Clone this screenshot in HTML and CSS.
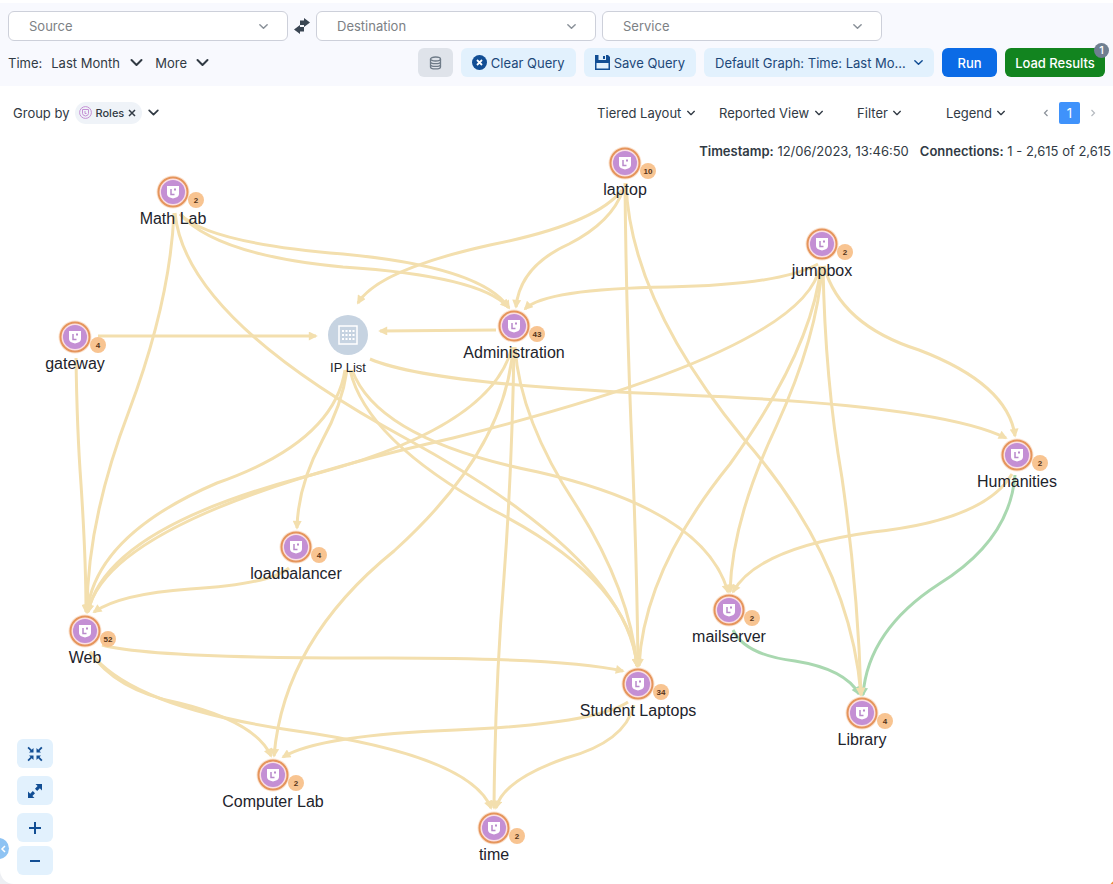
FILE: index.html
```html
<!DOCTYPE html>
<html lang="en">
<head>
    <meta charset="UTF-8">
    <meta name="viewport" content="width=device-width, initial-scale=1.0">
    <title>Traffic Map</title>
    <link rel="stylesheet" href="styles.css">
</head>
<body>

<!-- Shared icons -->
<svg class="defs" width="0" height="0" aria-hidden="true">
    <symbol id="chevron" viewBox="0 0 12 12">
        <path d="M2 4l4 4 4-4" fill="none" stroke="currentColor" stroke-width="1.6" stroke-linecap="round" stroke-linejoin="round"/>
    </symbol>
    <symbol id="shield" viewBox="0 0 14 14">
        <path d="M1 1h12v7.5q0 3-3 4l-3 1-3-1q-3-1-3-4z" fill="#fff"/>
        <path d="M5 4v5.5h3.5" fill="none" stroke="#b98acb" stroke-width="1.5"/>
        <rect x="8" y="3.5" width="2" height="2" fill="#b98acb"/>
    </symbol>
    <symbol id="node" viewBox="-18 -18 36 36">
        <circle r="16.5" fill="#fbe3cf"/>
        <circle r="14.5" fill="#fbdfe3" stroke="#e5955c" stroke-width="2"/>
        <circle r="12" fill="#c48fd4"/>
        <use href="#shield" x="-7" y="-7" width="14" height="14"/>
    </symbol>
</svg>

<header class="query">
    <div class="fields">
        <div class="field">
            <input type="text" placeholder="Source" aria-label="Source">
            <svg class="icon"><use href="#chevron"/></svg>
        </div>
        <button class="swap" aria-label="Swap source and destination">
            <svg width="16" height="16" viewBox="0 0 16 16" fill="#3a4653">
                <path d="M6 2.5h4V0l6 4.5L10 9V7H6z"/>
                <path d="M10 13.5H6V16l-6-4.5L6 7v2h4z"/>
            </svg>
        </button>
        <div class="field">
            <input type="text" placeholder="Destination" aria-label="Destination">
            <svg class="icon"><use href="#chevron"/></svg>
        </div>
        <div class="field">
            <input type="text" placeholder="Service" aria-label="Service">
            <svg class="icon"><use href="#chevron"/></svg>
        </div>
    </div>

    <div class="actions">
        <div class="time">
            <label for="time">Time:</label>
            <span class="drop">
                <select id="time"><option>Last Month</option></select>
                <svg class="icon big"><use href="#chevron"/></svg>
            </span>
            <button class="more">More <svg class="icon big"><use href="#chevron"/></svg></button>
        </div>
        <button class="btn data" aria-label="Data source">
            <svg width="13" height="14" viewBox="0 0 13 14" fill="none" stroke="#6f7b88" stroke-width="1.3">
                <ellipse cx="6.5" cy="3" rx="5" ry="2"/>
                <path d="M1.5 3v8c0 2.6 10 2.6 10 0V3M1.5 5.7c0 2.6 10 2.6 10 0M1.5 8.4c0 2.6 10 2.6 10 0"/>
            </svg>
        </button>
        <button class="btn">
            <svg width="15" height="15" viewBox="0 0 15 15">
                <circle cx="7.5" cy="7.5" r="7.5" fill="#124e94"/>
                <path d="M5 5l5 5M10 5l-5 5" stroke="#fff" stroke-width="1.8"/>
            </svg>
            Clear Query
        </button>
        <button class="btn">
            <svg width="15" height="15" viewBox="0 0 15 15">
                <path d="M0 0h13l2 2v13H0z" fill="#124e94"/>
                <path d="M3.5 0h7.5v5H3.5z" fill="#e2f1fd"/>
                <path d="M8 1h2v3H8z" fill="#124e94"/>
                <path d="M1.5 8h12v5.5h-12z" fill="#e2f1fd"/>
            </svg>
            Save Query
        </button>
        <span class="drop graph">
            <select class="btn" aria-label="Saved query"><option>Default Graph: Time: Last Mo...</option></select>
            <svg class="icon"><use href="#chevron"/></svg>
        </span>
        <button class="btn run">Run</button>
        <button class="btn load">Load Results<span class="count">1</span></button>
    </div>
</header>

<nav class="view">
    <div class="group">
        <span>Group by</span>
        <span class="chip">
            <svg width="13" height="13" viewBox="0 0 13 13" fill="none" stroke="#c48fd4">
                <circle cx="6.5" cy="6.5" r="5.9"/>
                <path d="M3.5 3.5h6v4q0 2-3 2.5-3-.5-3-2.5zM6 5v2.5h1.5"/>
            </svg>
            Roles
            <button aria-label="Remove Roles">
                <svg width="8" height="8" viewBox="0 0 8 8"><path d="M1 1l6 6M7 1L1 7" stroke="#313a44" stroke-width="1.5"/></svg>
            </button>
        </span>
        <button aria-label="Group options"><svg class="icon mid"><use href="#chevron"/></svg></button>
    </div>
    <span class="drop layout">
        <select aria-label="Layout"><option>Tiered Layout</option></select>
        <svg class="icon"><use href="#chevron"/></svg>
    </span>
    <span class="drop reported">
        <select aria-label="View"><option>Reported View</option></select>
        <svg class="icon"><use href="#chevron"/></svg>
    </span>
    <button class="filter">Filter <svg class="icon"><use href="#chevron"/></svg></button>
    <button class="legend">Legend <svg class="icon"><use href="#chevron"/></svg></button>
    <div class="pager">
        <button aria-label="Previous page"><svg width="6" height="8" viewBox="0 0 6 8"><path d="M4.5 1l-3 3 3 3" fill="none" stroke="#8a9199" stroke-width="1.2"/></svg></button>
        <button class="current">1</button>
        <button aria-label="Next page"><svg width="6" height="8" viewBox="0 0 6 8"><path d="M1.5 1l3 3-3 3" fill="none" stroke="#b5bac0" stroke-width="1.2"/></svg></button>
    </div>
</nav>

<main class="map">
    <svg class="graph-canvas" viewBox="0 139 1113 745">
        <defs>
            <marker id="arrow" viewBox="0 0 10 10" refX="8" refY="5" markerWidth="10" markerHeight="9" markerUnits="userSpaceOnUse" orient="auto">
                <path d="M0 0l10 5-10 5z" fill="#f3dfae"/>
            </marker>
            <marker id="arrow-green" viewBox="0 0 10 10" refX="8" refY="5" markerWidth="10" markerHeight="9" markerUnits="userSpaceOnUse" orient="auto">
                <path d="M0 0l10 5-10 5z" fill="#a9d8b0"/>
            </marker>
        </defs>

        <!-- Allowed connections -->
        <g class="edges green">
            <path d="M1015 475Q1010 540 939 584Q868 630 863 695"/>
            <path d="M733 630Q745 655 795 661Q845 669 859 694"/>
        </g>

        <!-- Potentially blocked connections -->
        <g class="edges">
            <path d="M174 213Q170 302 129 411Q87 521 87 612"/>
            <path d="M175 213Q185 318 405 438Q626 558 637 666"/>
            <path d="M180 214Q208 243 343 254Q482 267 509 308"/>
            <path d="M180 214Q216 255 343 267Q480 276 508 307"/>
            <path d="M622 190Q596 224 490 245Q378 270 358 303"/>
            <path d="M623 190Q612 222 569 244Q520 266 516 307"/>
            <path d="M625 183Q626 300 631 424Q637 560 638 666"/>
            <path d="M626 183Q630 300 743 438Q850 560 861 695"/>
            <path d="M818 264Q780 285 668 287Q545 289 525 309"/>
            <path d="M820 266Q806 350 453 438Q108 516 88 612"/>
            <path d="M824 266Q840 325 919 350Q1008 384 1015 436"/>
            <path d="M822 266Q818 335 776 427Q732 520 730 592"/>
            <path d="M821 266Q812 350 730 464Q644 570 639 666"/>
            <path d="M823 266Q825 380 842 478Q858 590 861 695"/>
            <path d="M496 330L380 331"/>
            <path d="M98 336L316 336"/>
            <path d="M76 358Q77 430 81 484Q86 560 86 612"/>
            <path d="M370 359Q430 385 683 395Q940 405 1006 438"/>
            <path d="M347 370Q342 405 322 441Q298 485 297 528"/>
            <path d="M345 370Q334 442 217 483Q96 535 87 612"/>
            <path d="M350 370Q366 440 493 510Q630 580 637 666"/>
            <path d="M352 370Q378 440 538 472Q705 510 728 592"/>
            <path d="M512 347Q492 430 300 478Q106 530 88 612"/>
            <path d="M513 347Q506 450 394 551Q284 640 274 756"/>
            <path d="M514 347Q512 470 504 577Q495 690 494 808"/>
            <path d="M515 347Q520 420 576 505Q630 590 637 666"/>
            <path d="M289 568Q270 584 190 589Q120 594 94 612"/>
            <path d="M102 645Q150 658 362 658Q560 657 623 671"/>
            <path d="M90 652Q115 690 179 703Q256 722 271 756"/>
            <path d="M90 652Q130 706 290 730Q470 755 491 808"/>
            <path d="M628 702Q595 724 456 730Q320 735 283 757"/>
            <path d="M634 705Q625 742 566 758Q503 780 496 808"/>
            <path d="M1012 474Q985 520 873 532Q757 548 733 592"/>
        </g>

        <!-- Groups -->
        <g class="node" transform="translate(173 192)">
            <use href="#node" x="-18" y="-18" width="36" height="36"/>
            <circle class="badge" cx="23" cy="8" r="8"/><text class="num" x="23" y="11">2</text>
            <text x="0" y="32">Math Lab</text>
        </g>
        <g class="node" transform="translate(625 163)">
            <use href="#node" x="-18" y="-18" width="36" height="36"/>
            <circle class="badge" cx="23" cy="8" r="8"/><text class="num" x="23" y="11">10</text>
            <text x="0" y="32">laptop</text>
        </g>
        <g class="node" transform="translate(822 244)">
            <use href="#node" x="-18" y="-18" width="36" height="36"/>
            <circle class="badge" cx="23" cy="8" r="8"/><text class="num" x="23" y="11">2</text>
            <text x="0" y="32">jumpbox</text>
        </g>
        <g class="node" transform="translate(514 326)">
            <use href="#node" x="-18" y="-18" width="36" height="36"/>
            <circle class="badge" cx="23" cy="8" r="8"/><text class="num" x="23" y="11">43</text>
            <text x="0" y="32">Administration</text>
        </g>
        <g class="node" transform="translate(75 337)">
            <use href="#node" x="-18" y="-18" width="36" height="36"/>
            <circle class="badge" cx="23" cy="8" r="8"/><text class="num" x="23" y="11">4</text>
            <text x="0" y="32">gateway</text>
        </g>
        <g class="node" transform="translate(1017 455)">
            <use href="#node" x="-18" y="-18" width="36" height="36"/>
            <circle class="badge" cx="23" cy="8" r="8"/><text class="num" x="23" y="11">2</text>
            <text x="0" y="32">Humanities</text>
        </g>
        <g class="node" transform="translate(296 547)">
            <use href="#node" x="-18" y="-18" width="36" height="36"/>
            <circle class="badge" cx="23" cy="8" r="8"/><text class="num" x="23" y="11">4</text>
            <text x="0" y="32">loadbalancer</text>
        </g>
        <g class="node" transform="translate(85 631)">
            <use href="#node" x="-18" y="-18" width="36" height="36"/>
            <circle class="badge" cx="23" cy="8" r="8"/><text class="num" x="23" y="11">52</text>
            <text x="0" y="32">Web</text>
        </g>
        <g class="node" transform="translate(729 610)">
            <use href="#node" x="-18" y="-18" width="36" height="36"/>
            <circle class="badge" cx="23" cy="8" r="8"/><text class="num" x="23" y="11">2</text>
            <text x="0" y="32">mailserver</text>
        </g>
        <g class="node" transform="translate(638 684)">
            <use href="#node" x="-18" y="-18" width="36" height="36"/>
            <circle class="badge" cx="23" cy="8" r="8"/><text class="num" x="23" y="11">34</text>
            <text x="0" y="32">Student Laptops</text>
        </g>
        <g class="node" transform="translate(862 713)">
            <use href="#node" x="-18" y="-18" width="36" height="36"/>
            <circle class="badge" cx="23" cy="8" r="8"/><text class="num" x="23" y="11">4</text>
            <text x="0" y="32">Library</text>
        </g>
        <g class="node" transform="translate(273 775)">
            <use href="#node" x="-18" y="-18" width="36" height="36"/>
            <circle class="badge" cx="23" cy="8" r="8"/><text class="num" x="23" y="11">2</text>
            <text x="0" y="32">Computer Lab</text>
        </g>
        <g class="node" transform="translate(494 828)">
            <use href="#node" x="-18" y="-18" width="36" height="36"/>
            <circle class="badge" cx="23" cy="8" r="8"/><text class="num" x="23" y="11">2</text>
            <text x="0" y="32">time</text>
        </g>

        <!-- IP list -->
        <g class="node" transform="translate(348 335)">
            <circle r="20" fill="#c6d3e1"/>
            <rect x="-9" y="-9" width="18" height="18" fill="none" stroke="#fff" stroke-width="1.5"/>
            <path d="M-6 -4H7M-6 0H7M-6 4H7" stroke="#fff" stroke-width="2" stroke-dasharray="2 1.5"/>
            <text class="small" x="0" y="37">IP List</text>
        </g>
        <circle cx="1118" cy="889" r="9" fill="#ef8f3c"/>
    </svg>

    <p class="stats">
        <span><b>Timestamp:</b> 12/06/2023, 13:46:50</span>
        <span><b>Connections:</b> 1 - 2,615 of 2,615</span>
    </p>

    <div class="zoom">
        <button class="btn" aria-label="Fit to screen">
            <svg width="16" height="16" viewBox="0 0 16 16" fill="#124e94">
                <path d="M6.5 6.5H2l1.500-1.500L.5 2 1.700.8l3 3L6.500 2zM9.500 6.500V2L11.200 3.800l3-3L15.500 2l-3 3L14 6.500zM6.500 9.500V14l-1.800-1.800-3 3L.5 14l3-3L2 9.500zM9.500 9.500H14L12.500 11l3 3-1.300 1.200-3-3L9.500 14z"/>
            </svg>
        </button>
        <button class="btn" aria-label="Expand">
            <svg width="16" height="16" viewBox="0 0 16 16" fill="#124e94">
                <path d="M8.500 1H15v6.500l-2.200-2.200-2.600 2.600-2.200-2.200 2.600-2.600zM7.500 15H1V8.500l2.200 2.200 2.600-2.600L8 10.300l-2.600 2.600z"/>
            </svg>
        </button>
        <button class="btn" aria-label="Zoom in">
            <svg width="12" height="12" viewBox="0 0 12 12"><path d="M6 0v12M0 6h12" stroke="#124e94" stroke-width="2"/></svg>
        </button>
        <button class="btn" aria-label="Zoom out">
            <svg width="12" height="12" viewBox="0 0 12 12"><path d="M1 6h10" stroke="#124e94" stroke-width="2"/></svg>
        </button>
    </div>
    <button class="collapse" aria-label="Collapse panel">
        <svg width="6" height="8" viewBox="0 0 6 8"><path d="M5 1L2 4l3 3" fill="none" stroke="#fff" stroke-width="1.5"/></svg>
    </button>
</main>

</body>
</html>
```
FILE: styles.css
```css
* {
    box-sizing: border-box;
}
body {
    margin: 0;
    font-family: Inter, "Liberation Sans", sans-serif;
    font-size: 13px;
    line-height: 16px;
    color: #313a44;
    background-color: #edeff3;
}
button, select, input {
    font: inherit;
    color: inherit;
    border: none;
    background: none;
    padding: 0;
    margin: 0;
}
button {
    display: inline-flex;
    align-items: center;
    justify-content: center;
    cursor: pointer;
}
select {
    appearance: none;
}
.defs {
    position: absolute;
}
.icon {
    width: 11px;
    height: 11px;
    flex: none;
    pointer-events: none;
}
.icon.mid {
    width: 13px;
    height: 13px;
}
.icon.big {
    width: 15px;
    height: 15px;
}

/* Query bar */
.query {
    background-color: #f8f9fe;
    border-top: 3px solid #fff;
    padding: 8px 8px 9px;
}
.fields {
    display: flex;
    gap: 6px;
    margin-bottom: 7px;
}
.field {
    flex: 0 1 280px;
    display: flex;
    align-items: center;
    height: 30px;
    padding: 0 18px 0 20px;
    border: 1px solid #cdd0da;
    border-radius: 6px;
    background-color: #fff;
    color: #8a9199;
}
.field input {
    flex: 1;
    min-width: 0;
    outline: none;
}
.field input::placeholder {
    color: #7d8185;
    opacity: 1;
}
.swap {
    width: 16px;
}
.actions {
    display: flex;
    align-items: center;
    gap: 8px;
}
.time {
    flex: 1;
    display: flex;
    align-items: center;
    gap: 9px;
}
.drop {
    display: inline-grid;
    align-items: center;
}
.drop select, .drop .icon {
    grid-area: 1 / 1;
}
.drop .icon {
    justify-self: end;
}
.drop select {
    padding-right: 24px;
}
.more {
    gap: 8px;
    margin-left: 2px;
}
.btn {
    height: 29px;
    gap: 4px;
    padding: 0 11px;
    border-radius: 6px;
    background-color: #e2f1fd;
    color: #1d4879;
    cursor: pointer;
}
.data {
    width: 35px;
    background-color: #dfe3ea;
}
.graph {
    color: #124e94;
}
.graph select {
    width: 230px;
}
.graph .icon {
    margin-right: 10px;
}
.run {
    width: 55px;
    background-color: #0b6be6;
    color: #fff;
    font-weight: 500;
}
.load {
    position: relative;
    width: 100px;
    background-color: #12841f;
    color: #fff;
    font-weight: 500;
    white-space: nowrap;
}
.count {
    position: absolute;
    top: -5px;
    right: -4px;
    width: 15px;
    height: 15px;
    border-radius: 50%;
    background-color: #6f7f91;
    font-size: 11px;
    line-height: 15px;
}

/* View bar */
.view {
    display: flex;
    align-items: center;
    height: 53px;
    padding: 0 17px 0 13px;
    background-color: #fff;
}
.view .drop select {
    padding-right: 14px;
}
.view .icon:not(.mid) {
    width: 10px;
    height: 10px;
}
.group {
    flex: 1;
    display: flex;
    align-items: center;
    gap: 5px;
}
.chip {
    display: flex;
    align-items: center;
    gap: 4px;
    height: 22px;
    padding: 0 6px 0 4px;
    border-radius: 11px;
    background-color: #eff3f8;
    font-size: 11px;
    font-weight: 500;
}
.layout {
    margin-right: 23px;
}
.reported {
    margin-right: 33px;
}
.filter, .legend {
    gap: 4px;
}
.filter {
    margin-right: 44px;
}
.legend {
    margin-right: 37px;
}
.pager {
    display: flex;
    align-items: center;
    gap: 10px;
}
.current {
    width: 21px;
    height: 22px;
    border-radius: 2px;
    background-color: #3f92fb;
    color: #fff;
}

/* Map */
.map {
    position: relative;
    overflow: hidden;
    background-color: #fff;
    border-bottom-left-radius: 14px;
}
.graph-canvas {
    display: block;
    width: 100%;
    height: auto;
}
.edges path {
    fill: none;
    stroke: #f3dfae;
    stroke-width: 3px;
    marker-end: url(#arrow);
}
.edges.green path {
    stroke: #a9d8b0;
    marker-end: url(#arrow-green);
}
.node text {
    font-family: "Liberation Sans", Arial, sans-serif;
    font-size: 16px;
    text-anchor: middle;
    fill: #1d232b;
}
.node .small {
    font-size: 13px;
}
.node .badge {
    fill: #f8c491;
}
.node .num {
    font-size: 8px;
    font-weight: bold;
    fill: #55341a;
}
.stats {
    position: absolute;
    top: 4px;
    right: 2px;
    margin: 0;
    display: flex;
    gap: 11px;
}
.stats b {
    font-weight: 600;
}
.zoom {
    position: absolute;
    left: 17px;
    bottom: 9px;
    display: grid;
    gap: 8px;
}
.zoom .btn {
    width: 36px;
    padding: 0;
}
.zoom .btn:last-child {
    margin-top: -4px;
}
.collapse {
    position: absolute;
    left: -12px;
    bottom: 25px;
    width: 21px;
    height: 21px;
    padding-left: 9px;
    border-radius: 50%;
    background-color: #8ec3f3;
}
```
